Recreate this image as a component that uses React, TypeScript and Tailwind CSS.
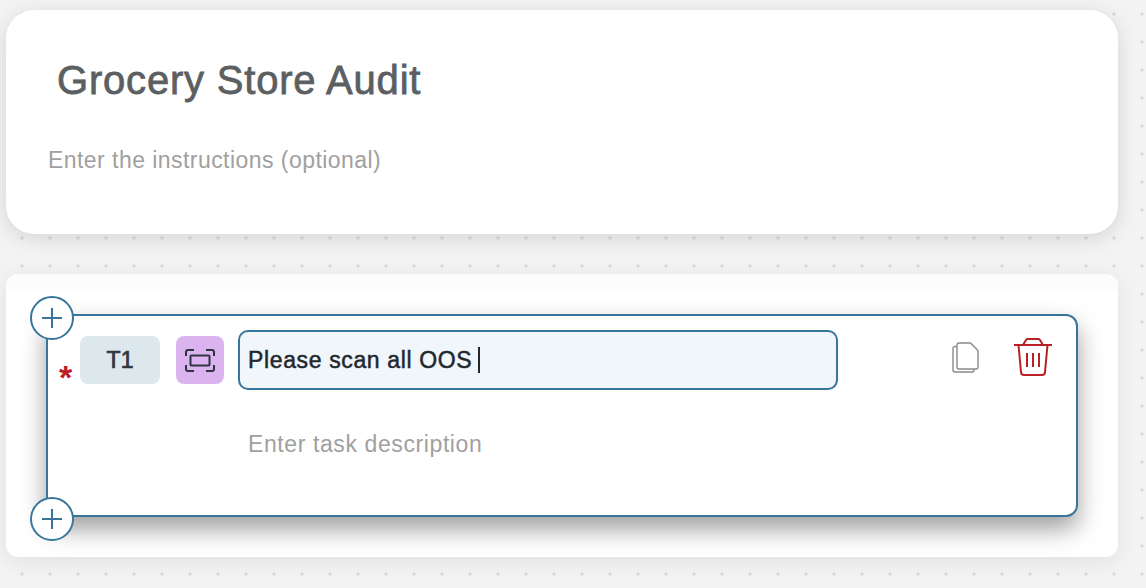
function PlusButton({ className }: { className: string }) {
  return (
    <button
      className={`absolute left-[-18px] flex h-[44px] w-[44px] items-center justify-center rounded-full border-2 border-[#38759a] bg-white ${className}`}
    >
      <svg width="20" height="20" viewBox="0 0 20 20" fill="none" stroke="#38759a" strokeWidth="2">
        <path d="M10 0v20M0 10h20" />
      </svg>
    </button>
  )
}

function ScanIcon() {
  return (
    <svg width="30" height="23" viewBox="0 0 30 23" fill="none" stroke="#2f3540" strokeWidth="2">
      <path d="M1 7V3a2 2 0 0 1 2-2h6" />
      <path d="M21 1h6a2 2 0 0 1 2 2v4" />
      <path d="M1 16v4a2 2 0 0 0 2 2h6" />
      <path d="M21 22h6a2 2 0 0 0 2-2v-4" />
      <rect x="5.500" y="6.500" width="19" height="10" rx="1" />
    </svg>
  )
}

function CopyIcon() {
  return (
    <svg width="28" height="32" viewBox="0 0 28 32" fill="none" stroke="#8a8a8a" strokeWidth="1.4">
      <path d="M5 4.500H3a2 2 0 0 0-2 2V28a2 2 0 0 0 2 2h17a2 2 0 0 0 2-2v-1" />
      <path d="M7 1h11.500L26 8.500V25a2 2 0 0 1-2 2H7a2 2 0 0 1-2-2V3a2 2 0 0 1 2-2z" fill="#fff" />
    </svg>
  )
}

function TrashIcon() {
  return (
    <svg width="38" height="38" viewBox="0 0 38 38" fill="none" stroke="#b92025" strokeWidth="2">
      <path d="M0 7h38" />
      <path d="M9 7l3-5a2 2 0 0 1 2-1h10a2 2 0 0 1 2 1l3 5" />
      <path d="M4.500 7l2.500 27a3 3 0 0 0 3 3h18a3 3 0 0 0 3-3l2.500-27" />
      <path d="M13 15v14M19 15v14M25 15v14" />
    </svg>
  )
}

export default function App() {
  return (
    <div className="h-[588px] w-[1146px] overflow-hidden bg-[#f3f3f3] bg-[radial-gradient(circle,#dedede_1.5px,transparent_2px)] bg-[size:28px_28px] bg-[position:8px_0] font-['Liberation_Sans',sans-serif]">
      <div className="flex h-full w-[1134px] flex-col overflow-hidden pl-1.5 pt-2.5">
        <section className="h-[224px] w-[1112px] shrink-0 rounded-[28px] bg-white px-[42px] pt-[48px] shadow-[0_4px_20px_rgba(0,0,0,0.13)]">
          <h1 className="pl-[9px] text-[40px] leading-[44px] tracking-[0.8px] text-[#5c5f62] [-webkit-text-stroke:0.8px_#5c5f62]">
            Grocery Store Audit
          </h1>
          <p className="mt-[44px] text-[23px] leading-[28px] tracking-[0.45px] text-[#a0a0a0]">
            Enter the instructions (optional)
          </p>
        </section>

        <section className="mt-10 h-[283px] w-[1112px] shrink-0 rounded-xl bg-white shadow-[0_4px_20px_rgba(0,0,0,0.08)]">
          <div className="h-4 rounded-t-xl bg-[#fcfcfc]" />
          <div className="relative ml-10 mt-6 h-[203px] w-[1032px] rounded-xl border-2 border-[#38759a] bg-white shadow-[0_12px_24px_rgba(0,0,0,0.38)]">
            <PlusButton className="top-[-20px]" />
            <PlusButton className="bottom-[-26px]" />

            <div className="flex pl-[32px] pt-[14px]">
              <div className="flex items-start">
                <div className="mt-[6px] flex h-12 w-20 items-center justify-center rounded-lg bg-[#dde8ec] text-[23px] text-[#2f3540] [-webkit-text-stroke:0.7px_#2f3540]">
                  T1
                </div>
                <div className="ml-4 mt-[6px] flex h-12 w-12 items-center justify-center rounded-lg bg-[#dbb4ef]">
                  <ScanIcon />
                </div>
                <div className="ml-[14px] flex h-[60px] w-[600px] items-center rounded-[10px] border-2 border-[#38759a] bg-[#f0f6f9] pl-2 text-[23px] tracking-[0.63px] text-[#22272e] [-webkit-text-stroke:0.5px_#22272e]">
                  Please scan all OOS
                  <span className="ml-[6px] h-[26px] w-[2px] bg-[#22272e]" />
                </div>
                <div className="ml-[114px] mt-[12px]">
                  <CopyIcon />
                </div>
                <div className="ml-[34px] mt-[8px]">
                  <TrashIcon />
                </div>
              </div>
            </div>

            <p className="ml-[200px] mt-[40px] text-[23px] leading-[28px] tracking-[0.6px] text-[#a0a0a0]">
              Enter task description
            </p>

            <span className="absolute left-[11px] top-[47px] text-[34px] font-bold leading-[28px] text-[#b92025]">*</span>
          </div>
        </section>
      </div>
    </div>
  )
}
